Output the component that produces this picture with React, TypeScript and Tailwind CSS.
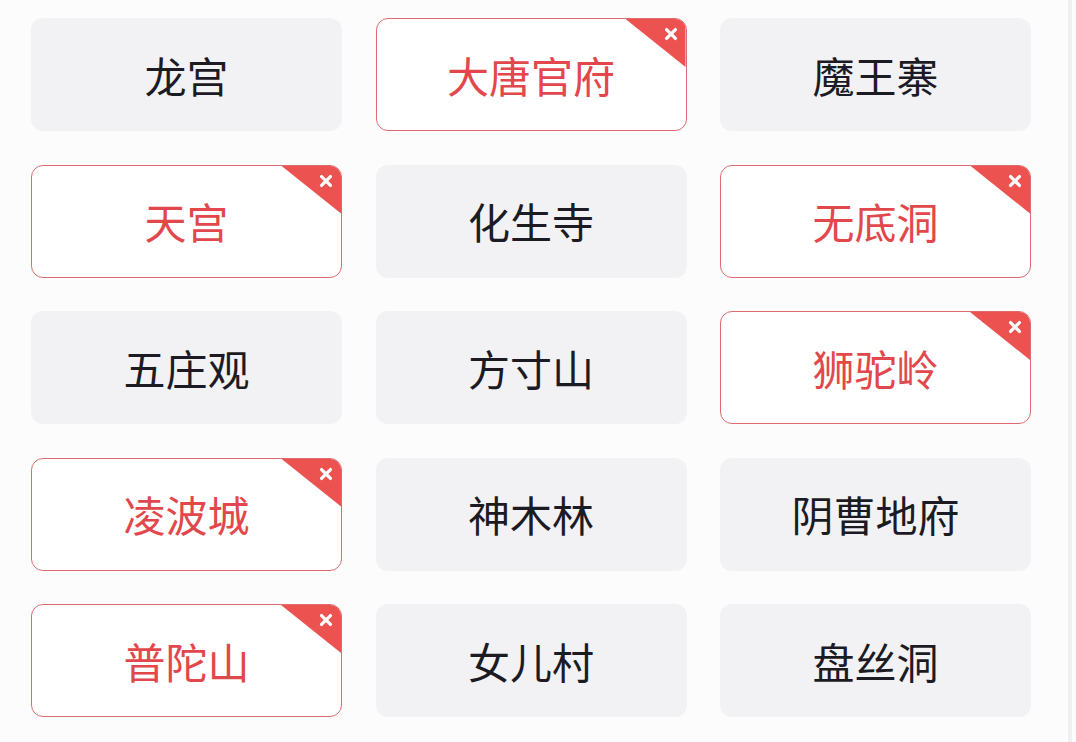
import React from 'react';

type Sect = { name: string; selected?: boolean };

const sects: Sect[] = [
  { name: '龙宫' },
  { name: '大唐官府', selected: true },
  { name: '魔王寨' },
  { name: '天宫', selected: true },
  { name: '化生寺' },
  { name: '无底洞', selected: true },
  { name: '五庄观' },
  { name: '方寸山' },
  { name: '狮驼岭', selected: true },
  { name: '凌波城', selected: true },
  { name: '神木林' },
  { name: '阴曹地府' },
  { name: '普陀山', selected: true },
  { name: '女儿村' },
  { name: '盘丝洞' },
];

// Corner ribbon with a small close cross
const CornerMark: React.FC = () => (
  <div className="absolute top-0 right-0 w-[60px] h-[48px] bg-[#ec5350] [clip-path:polygon(0_0,100%_0,100%_100%)]">
    <svg
      className="absolute top-[8px] right-[8px] w-[14px] h-[14px]"
      viewBox="0 0 12 12"
      fill="none"
      stroke="white"
      strokeWidth={2.8}
      strokeLinecap="round"
    >
      <path d="M2.2 2.2 L9.8 9.8 M9.8 2.2 L2.2 9.8" />
    </svg>
  </div>
);

const SectCard: React.FC<{ sect: Sect }> = ({ sect }) => (
  <div
    className={`relative overflow-hidden h-[113px] rounded-[12px] flex items-center justify-center ${
      sect.selected ? 'bg-white border-[1.5px] border-[#dd6b70]' : 'bg-[#f2f2f5]'
    }`}
  >
    <span
      className={`text-[42px] leading-none ${sect.selected ? 'text-[#e2474c]' : 'text-[#1c1b24]'}`}
      style={{ fontFamily: '"Noto Sans CJK SC", "Noto Sans", sans-serif' }}
    >
      {sect.name}
    </span>
    {sect.selected && <CornerMark />}
  </div>
);

export default function App() {
  return (
    <div className="w-[1076px] h-[742px] bg-[#fcfcfd] flex overflow-hidden">
      <div className="flex-1 pl-[31px] pt-[18px]">
        <div className="grid grid-cols-[311px_311px_311px] gap-x-[33.5px] gap-y-[33.5px]">
          {sects.map((s) => (
            <SectCard key={s.name} sect={s} />
          ))}
        </div>
      </div>
      <div className="w-[4px] mr-[4px] bg-[#f0f0f2]" />
    </div>
  );
}
